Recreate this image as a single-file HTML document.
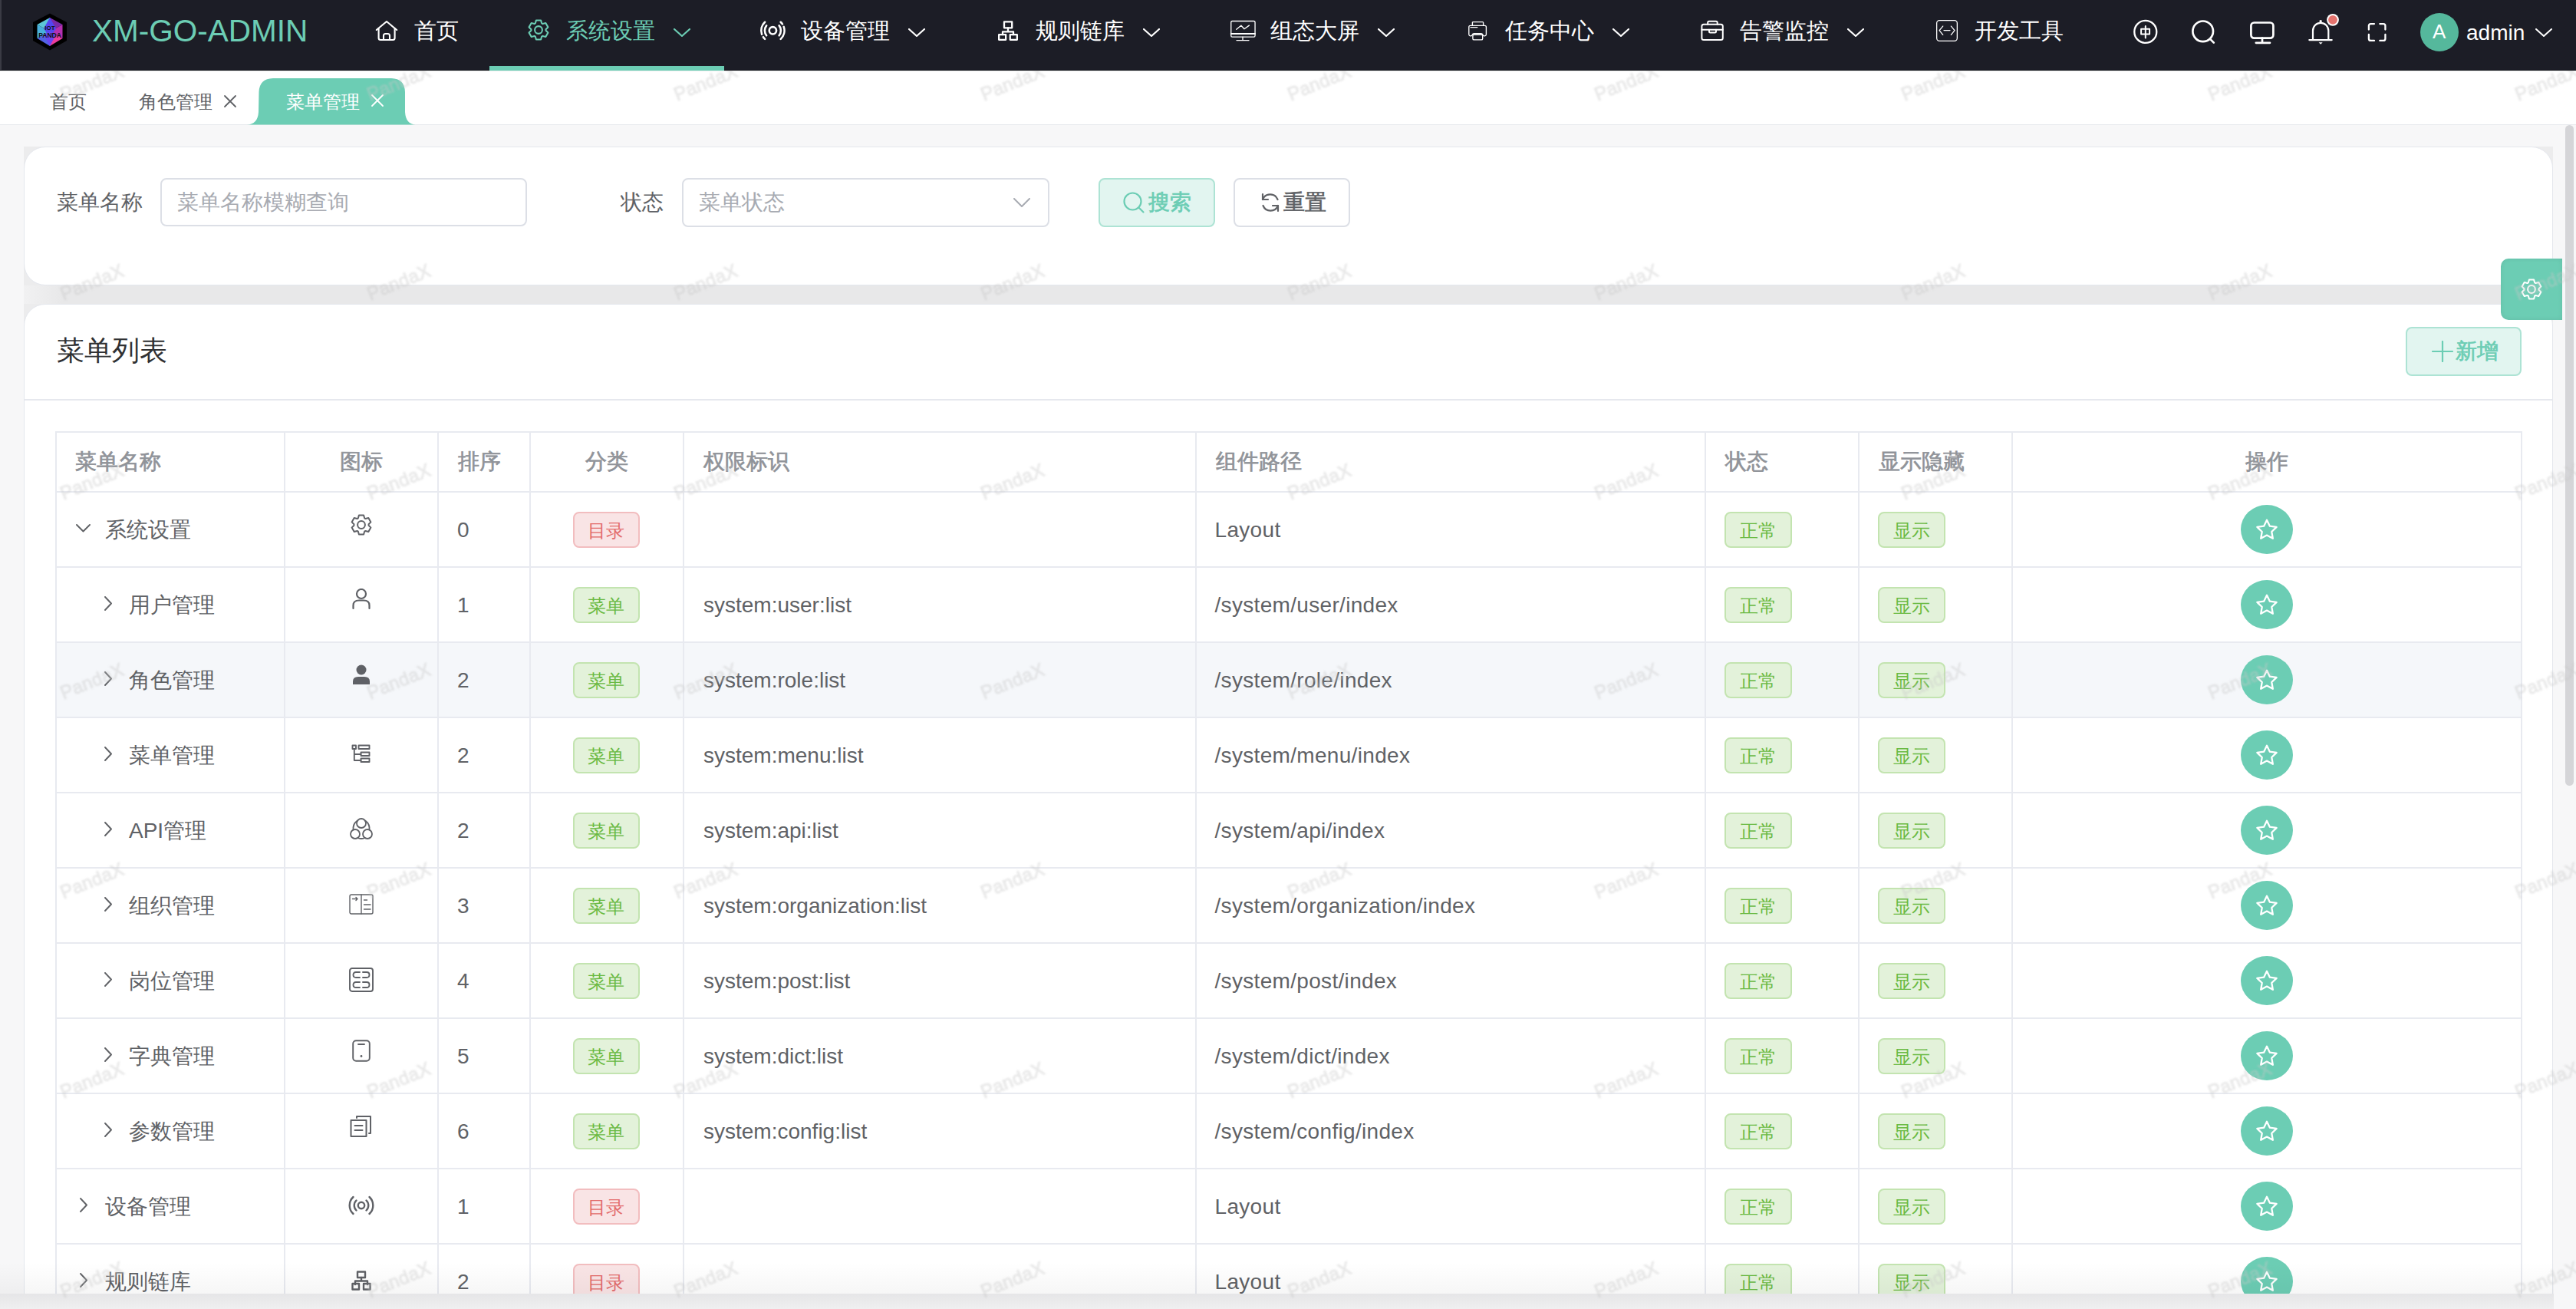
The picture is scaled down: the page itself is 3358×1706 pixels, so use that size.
<!DOCTYPE html>
<html><head><meta charset="utf-8"><title>XM-GO-ADMIN</title>
<style>
html,body{margin:0;padding:0}
body{width:3358px;height:1706px;position:relative;overflow:hidden;font-family:"Liberation Sans",sans-serif;background:#f7f7f8}
.t{position:absolute;line-height:1;white-space:nowrap}
.wm{position:absolute;width:100px;height:26px;line-height:26px;text-align:center;font-size:24px;letter-spacing:0.3px;color:rgba(200,200,200,0.33);-webkit-text-stroke:0.9px rgba(200,200,200,0.33);transform:rotate(-22deg);white-space:nowrap;filter:blur(0.9px)}
</style></head><body>
<div style="position:absolute;left:0;top:0;width:3358px;height:92px;background:#1c1d26;z-index:5"><svg style="position:absolute;left:42px;top:17px" width="46" height="50" viewBox="0 0 46 50">
<polygon points="23,0.5 45,12 45,36 23,48.5 1,36 1,12" fill="#000"/>
<polygon points="23,6 39.5,15 23,24" fill="#7a2aa8"/>
<polygon points="39.5,15 39.5,33 23,24" fill="#b52fb0"/>
<polygon points="39.5,33 23,43 23,24" fill="#ec3c9c"/>
<polygon points="23,43 6.5,33 23,24" fill="#5162e4"/>
<polygon points="6.5,33 6.5,15 23,24" fill="#49b0dc"/>
<polygon points="6.5,15 23,6 23,24" fill="#5cc6d6"/>
<polygon points="23,6 31,20 23,33 15,20" fill="#5346f0"/>
<polygon points="23,43 15,28 23,24 31,28" fill="#6a44f2"/>
<text x="23" y="22" font-family="Liberation Sans" font-size="8" font-weight="700" text-anchor="middle" fill="#111">IOT</text>
<text x="23" y="32" font-family="Liberation Sans" font-size="8.5" font-weight="700" text-anchor="middle" fill="#111">PANDA</text>
</svg><div class="t" style="left:120px;top:20px;font-size:40.5px;color:#6ccdb4;font-weight:400;">XM-GO-ADMIN</div><svg style="position:absolute;left:489px;top:26px;color:#fff" width="30" height="28" viewBox="0 0 30 28" fill="none" stroke="currentColor" stroke-width="2.1" stroke-linecap="round" stroke-linejoin="round"><path d="M1.8,13 L15,2 L28.2,13"/><path d="M4.6,11 V23.5 Q4.6,26 7,26 H23.2 Q25.6,26 25.6,23.5 V11"/><path d="M11,26 V20.5 Q11,18 13.5,18 H16.5 Q19,18 19,20.5 V26"/></svg><div class="t" style="left:540px;top:26px;font-size:29px;color:#fff;font-weight:400;">首页</div><svg style="position:absolute;left:688px;top:25px;color:#6ccdb4" width="28" height="28" viewBox="0 0 28 28" fill="none" stroke="currentColor" stroke-width="2.1" stroke-linecap="round" stroke-linejoin="round"><path d="M9.87,5.34 L10.92,1.47 L17.08,1.47 L18.13,5.34 L19.44,6.09 L23.31,5.07 L26.39,10.40 L23.57,13.25 L23.57,14.75 L26.39,17.60 L23.31,22.93 L19.44,21.91 L18.13,22.66 L17.08,26.53 L10.92,26.53 L9.87,22.66 L8.56,21.91 L4.69,22.93 L1.61,17.60 L4.43,14.75 L4.43,13.25 L1.61,10.40 L4.69,5.07 L8.56,6.09 Z"/><circle cx="14" cy="14" r="4.9"/></svg><div class="t" style="left:738px;top:26px;font-size:29px;color:#6ccdb4;font-weight:400;">系统设置</div><svg style="position:absolute;left:878px;top:37px;color:#6ccdb4" width="22" height="11" viewBox="0 0 22 11" fill="none" stroke="currentColor" stroke-width="2.2" stroke-linecap="round" stroke-linejoin="round"><path d="M1,1 L11.0,10 L21,1"/></svg><svg style="position:absolute;left:983px;top:15px;color:#fff" width="50" height="50" viewBox="0 0 50 50" fill="none" stroke="currentColor" stroke-width="2.6" stroke-linecap="round" stroke-linejoin="round"><circle cx="24.4" cy="24.8" r="4.65"/><path d="M16.13,18.34 A10.5,10.5 0 0 0 16.13,31.26"/><path d="M32.67,18.34 A10.5,10.5 0 0 1 32.67,31.26"/><path d="M14.10,13.76 A15.1,15.1 0 0 0 10.12,29.72"/><path d="M11.88,33.24 A15.1,15.1 0 0 0 14.10,35.84"/><path d="M34.70,13.76 A15.1,15.1 0 0 1 36.92,16.36"/><path d="M38.68,19.88 A15.1,15.1 0 0 1 34.70,35.84"/></svg><div class="t" style="left:1044px;top:26px;font-size:29px;color:#fff;font-weight:400;">设备管理</div><svg style="position:absolute;left:1184px;top:37px;color:#fff" width="22" height="11" viewBox="0 0 22 11" fill="none" stroke="currentColor" stroke-width="2.2" stroke-linecap="round" stroke-linejoin="round"><path d="M1,1 L11.0,10 L21,1"/></svg><svg style="position:absolute;left:1300px;top:26px;color:#fff" width="28" height="28" viewBox="0 0 28 28" fill="none" stroke="currentColor" stroke-width="2.3" stroke-linecap="round" stroke-linejoin="round"><rect x="9" y="2.4" width="10.2" height="7.9"/><path d="M14,10.3 V15.3 M7,19.2 V15.3 H21 V19.2"/><rect x="2.15" y="19.15" width="9" height="6.7"/><rect x="16.75" y="19.15" width="9.1" height="6.7"/></svg><div class="t" style="left:1350px;top:26px;font-size:29px;color:#fff;font-weight:400;">规则链库</div><svg style="position:absolute;left:1490px;top:37px;color:#fff" width="22" height="11" viewBox="0 0 22 11" fill="none" stroke="currentColor" stroke-width="2.2" stroke-linecap="round" stroke-linejoin="round"><path d="M1,1 L11.0,10 L21,1"/></svg><svg style="position:absolute;left:1603px;top:26px;color:#fff" width="35" height="28" viewBox="0 0 35 28" fill="none" stroke="currentColor" stroke-width="1.35" stroke-linecap="round" stroke-linejoin="round"><rect x="1.75" y="1.45" width="31.3" height="20.7" rx="1.6"/><path d="M1.75,18 H33" stroke-width="2"/><path d="M17,22.2 V26.5 M9,26.6 H25"/><path d="M8.75,12.3 L14.9,7.3 L19,11.7 L25.4,7.1"/></svg><div class="t" style="left:1656px;top:26px;font-size:29px;color:#fff;font-weight:400;">组态大屏</div><svg style="position:absolute;left:1796px;top:37px;color:#fff" width="22" height="11" viewBox="0 0 22 11" fill="none" stroke="currentColor" stroke-width="2.2" stroke-linecap="round" stroke-linejoin="round"><path d="M1,1 L11.0,10 L21,1"/></svg><svg style="position:absolute;left:1913px;top:27px;color:#fff" width="26" height="26" viewBox="0 0 26 26" fill="none" stroke="currentColor" stroke-width="1.35" stroke-linecap="round" stroke-linejoin="round"><path d="M6.4,6.3 V2.6 Q6.4,1.6 7.4,1.6 H19.6 Q20.6,1.6 20.6,2.6 V6.3"/><path d="M6,18.8 Q5.2,20 3.5,19.8 Q1.8,19.6 1.8,17.8 V8.2 Q1.8,6.3 3.7,6.3 H22.5 Q24.4,6.3 24.4,8.2 V17.8 Q24.4,19.6 22.7,19.8 Q21,20 20.2,18.8 Q19.6,16.7 18,16.7 H8.2 Q6.6,16.7 6,18.8 Z"/><rect x="6.9" y="18.2" width="12.8" height="6.7" rx="1.5"/><path d="M4,8.6 H12.8"/></svg><div class="t" style="left:1962px;top:26px;font-size:29px;color:#fff;font-weight:400;">任务中心</div><svg style="position:absolute;left:2102px;top:37px;color:#fff" width="22" height="11" viewBox="0 0 22 11" fill="none" stroke="currentColor" stroke-width="2.2" stroke-linecap="round" stroke-linejoin="round"><path d="M1,1 L11.0,10 L21,1"/></svg><svg style="position:absolute;left:2216px;top:26px;color:#fff" width="32" height="28" viewBox="0 0 32 28" fill="none" stroke="currentColor" stroke-width="2" stroke-linecap="round" stroke-linejoin="round"><rect x="2.4" y="5.85" width="27.4" height="20.15" rx="2.5"/><path d="M10.2,5.85 V3.5 Q10.2,1.8 12,1.8 H20.8 Q22.7,1.8 22.7,3.5 V5.85"/><path d="M2.4,12.7 H29.8"/><path d="M12,12.7 V15.3 Q12,16.6 13.4,16.6 H19.6 Q21,16.6 21,15.3 V12.7"/></svg><div class="t" style="left:2268px;top:26px;font-size:29px;color:#fff;font-weight:400;">告警监控</div><svg style="position:absolute;left:2408px;top:37px;color:#fff" width="22" height="11" viewBox="0 0 22 11" fill="none" stroke="currentColor" stroke-width="2.2" stroke-linecap="round" stroke-linejoin="round"><path d="M1,1 L11.0,10 L21,1"/></svg><svg style="position:absolute;left:2523px;top:25px;color:#fff" width="30" height="30" viewBox="0 0 30 30" fill="none" stroke="currentColor" stroke-width="1.3" stroke-linecap="round" stroke-linejoin="round"><rect x="1.65" y="1.65" width="26.7" height="26.7" rx="3.5"/><path d="M9.7,9.1 L5.1,14.6 L9.7,20.4 M11,14.6 H19 M20.4,9.1 L25,14.6 L20.4,20.4"/></svg><div class="t" style="left:2574px;top:26px;font-size:29px;color:#fff;font-weight:400;">开发工具</div><div style="position:absolute;left:0;top:0;width:2px;height:92px;background:#3a3b44"></div><div style="position:absolute;left:0;top:91px;width:3358px;height:1px;background:#111218"></div><div style="position:absolute;left:638px;top:86px;width:306px;height:6px;background:#6ccdb4"></div><svg style="position:absolute;left:2779px;top:24px;color:#fff" width="36" height="36" viewBox="0 0 36 36" fill="none" stroke="currentColor" stroke-width="2" stroke-linecap="round" stroke-linejoin="round"><circle cx="17.8" cy="17.4" r="14.5" stroke-width="2.3"/><rect x="12.1" y="13.8" width="11" height="6.8"/><path d="M17.8,10.1 V25.6"/></svg><svg style="position:absolute;left:2856px;top:24px;color:#fff" width="36" height="36" viewBox="0 0 36 36" fill="none" stroke="currentColor" stroke-width="2.7" stroke-linecap="round" stroke-linejoin="round"><circle cx="15.7" cy="16.8" r="13.3"/><path d="M25.6,27.4 L29.8,31.6"/></svg><svg style="position:absolute;left:2932px;top:27px;color:#fff" width="36" height="34" viewBox="0 0 36 34" fill="none" stroke="currentColor" stroke-width="2.7" stroke-linecap="round" stroke-linejoin="round"><rect x="2.4" y="2.5" width="29" height="20.1" rx="4"/><path d="M17,22.6 V28.5 M8.8,28.8 H27"/></svg><svg style="position:absolute;left:3005px;top:20px;color:#fff" width="40" height="40" viewBox="0 0 40 40" fill="none" stroke="currentColor" stroke-width="2.2" stroke-linecap="round" stroke-linejoin="round"><path d="M10,31.5 V20 A10.15,10.15 0 0 1 30.3,20 V31.5"/><path d="M5.3,32.1 H34.7"/><circle cx="20.15" cy="7.6" r="1.7" fill="#fff" stroke="none"/><path d="M17.6,35.2 H22.7 L20.15,37.8 Z" fill="#fff" stroke="none"/></svg><svg style="position:absolute;left:3031px;top:16px" width="20" height="20" viewBox="0 0 20 20"><circle cx="10" cy="9.8" r="7.9" fill="#fff"/><circle cx="10" cy="9.8" r="5.9" fill="#e5736e"/></svg><svg style="position:absolute;left:3085px;top:28px;color:#fff" width="28" height="28" viewBox="0 0 28 28" fill="none" stroke="currentColor" stroke-width="2.3" stroke-linecap="round" stroke-linejoin="round"><path d="M2.9,10.5 V5.6 Q2.9,3.1 5.4,3.1 H10 M17.3,3.1 H21.9 Q24.4,3.1 24.4,5.6 V10.5 M2.9,17 V22.4 Q2.9,24.9 5.4,24.9 H10 M17.3,24.9 H21.9 Q24.4,24.9 24.4,22.4 V17"/></svg><div style="position:absolute;left:3155px;top:17px;width:50px;height:50px;border-radius:50%;background:#55b89c"></div><div class="t" style="left:3171px;top:27.5px;font-size:26px;color:#fff;font-weight:400;">A</div><div class="t" style="left:3215px;top:29px;font-size:28px;color:#fff;font-weight:400;">admin</div><svg style="position:absolute;left:3305px;top:37px;color:#fff" width="22" height="11" viewBox="0 0 22 11" fill="none" stroke="currentColor" stroke-width="2" stroke-linecap="round" stroke-linejoin="round"><path d="M1,1 L11.0,10 L21,1"/></svg></div><div style="position:absolute;left:0;top:92px;width:3358px;height:70px;background:#fff"></div><div style="position:absolute;left:0;top:162px;width:3358px;height:1px;background:#e6e8ec"></div><div style="position:absolute;left:0;top:92px;width:3358px;height:1px;background:#eef0f0"></div><div class="t" style="left:65px;top:121px;font-size:24px;color:#606266;font-weight:400;">首页</div><div class="t" style="left:181px;top:121px;font-size:24px;color:#606266;font-weight:400;">角色管理</div><svg style="position:absolute;left:291px;top:123px;color:#606266" width="18" height="18" viewBox="0 0 18 18" fill="none" stroke="currentColor" stroke-width="1.8" stroke-linecap="round" stroke-linejoin="round"><path d="M2,2 L16,16 M16,2 L2,16"/></svg><svg style="position:absolute;left:322px;top:102px" width="220" height="61" viewBox="0 0 220 61">
<path d="M0,60.5 Q14,60 15,44 L15.5,18 Q16,0.5 34,0 L188,0 Q205.5,0.5 206,18 L206,44 Q207,60 220,60.5 Z" fill="#6ccdb4"/></svg><div class="t" style="left:373px;top:121px;font-size:24px;color:#fff;font-weight:400;">菜单管理</div><svg style="position:absolute;left:483px;top:122px;color:#fff" width="18" height="18" viewBox="0 0 18 18" fill="none" stroke="currentColor" stroke-width="1.8" stroke-linecap="round" stroke-linejoin="round"><path d="M2,2 L16,16 M16,2 L2,16"/></svg><div style="position:absolute;left:0;top:163px;width:3358px;height:1543px;background:#f7f7f8"></div><div style="position:absolute;left:31px;top:191px;width:3297px;height:230px;background:#ececed"></div><div style="position:absolute;left:31px;top:191px;width:3297px;height:181px;background:#fff;border:1px solid #e4e7ed;border-radius:28px;box-sizing:border-box"></div><div style="position:absolute;left:31px;top:372px;width:3297px;height:24px;background:linear-gradient(90deg,#f1f1f2,#e8e8e9 50px,#e8e8e9)"></div><div class="t" style="left:74px;top:250px;font-size:28px;color:#606266;font-weight:400;">菜单名称</div><div style="position:absolute;left:209px;top:232px;width:478px;height:63px;border:2px solid #dcdfe6;border-radius:8px;box-sizing:border-box;background:#fff"></div><div class="t" style="left:231px;top:250px;font-size:28px;color:#a8abb2;font-weight:400;">菜单名称模糊查询</div><div class="t" style="left:809px;top:250px;font-size:28px;color:#606266;font-weight:400;">状态</div><div style="position:absolute;left:889px;top:232px;width:479px;height:64px;border:2px solid #dcdfe6;border-radius:8px;box-sizing:border-box;background:#fff"></div><div class="t" style="left:911px;top:250px;font-size:28px;color:#a8abb2;font-weight:400;">菜单状态</div><svg style="position:absolute;left:1321px;top:258px;color:#a8abb2" width="22" height="12" viewBox="0 0 22 12" fill="none" stroke="currentColor" stroke-width="2" stroke-linecap="round" stroke-linejoin="round"><path d="M1,1 L11.0,11 L21,1"/></svg><div style="position:absolute;left:1432px;top:232px;width:152px;height:64px;border:2px solid #ade3d4;border-radius:8px;box-sizing:border-box;background:#e2f5f0"></div><svg style="position:absolute;left:1464px;top:250px;color:#6ccdb4" width="30" height="30" viewBox="0 0 30 30" fill="none" stroke="currentColor" stroke-width="2.2" stroke-linecap="round" stroke-linejoin="round"><circle cx="12.5" cy="12.5" r="11"/><path d="M20.5,20.5 L26.5,26.5"/></svg><div class="t" style="left:1497px;top:250px;font-size:27.5px;color:#6ccdb4;font-weight:400;-webkit-text-stroke:0.7px #6ccdb4">搜索</div><div style="position:absolute;left:1608px;top:232px;width:152px;height:64px;border:2px solid #dcdfe6;border-radius:8px;box-sizing:border-box;background:#fff"></div><svg style="position:absolute;left:1642px;top:250px;color:#606266" width="28" height="28" viewBox="0 0 28 28" fill="none" stroke="currentColor" stroke-width="2.2" stroke-linecap="round" stroke-linejoin="round"><path d="M23.5,10 A10.5,10.5 0 0 0 4,10"/><path d="M4,3 V10 H11" /><path d="M4.5,18 A10.5,10.5 0 0 0 24,18"/><path d="M24,25 V18 H17"/></svg><div class="t" style="left:1673px;top:250px;font-size:27.5px;color:#606266;font-weight:400;-webkit-text-stroke:0.7px #606266">重置</div><div style="position:absolute;left:31px;top:396px;width:3297px;height:1400px;background:#fff;border:1px solid #e4e7ed;border-radius:28px;box-sizing:border-box"></div><div class="t" style="left:74px;top:439px;font-size:36px;color:#303133;font-weight:400;">菜单列表</div><div style="position:absolute;left:3136px;top:426px;width:151px;height:64px;border:2px solid #ade3d4;border-radius:8px;box-sizing:border-box;background:#e2f5f0"></div><svg style="position:absolute;left:3170px;top:444px;color:#6ccdb4" width="28" height="28" viewBox="0 0 28 28" fill="none" stroke="currentColor" stroke-width="2.2" stroke-linecap="round" stroke-linejoin="round"><path d="M14,1 V27 M1,14 H27"/></svg><div class="t" style="left:3201px;top:444px;font-size:27.5px;color:#6ccdb4;font-weight:400;-webkit-text-stroke:0.7px #6ccdb4">新增</div><div style="position:absolute;left:32px;top:520px;width:3295px;height:2px;background:#e6e8ee"></div><div style="position:absolute;left:73px;top:837px;width:3214px;height:98px;background:#f5f7fa"></div><div style="position:absolute;left:73px;top:562px;width:3215px;height:2px;background:#e8eaf0"></div><div style="position:absolute;left:73px;top:640px;width:3215px;height:2px;background:#e8eaf0"></div><div style="position:absolute;left:73px;top:738px;width:3215px;height:2px;background:#e8eaf0"></div><div style="position:absolute;left:73px;top:836px;width:3215px;height:2px;background:#e8eaf0"></div><div style="position:absolute;left:73px;top:934px;width:3215px;height:2px;background:#e8eaf0"></div><div style="position:absolute;left:73px;top:1032px;width:3215px;height:2px;background:#e8eaf0"></div><div style="position:absolute;left:73px;top:1130px;width:3215px;height:2px;background:#e8eaf0"></div><div style="position:absolute;left:73px;top:1228px;width:3215px;height:2px;background:#e8eaf0"></div><div style="position:absolute;left:73px;top:1326px;width:3215px;height:2px;background:#e8eaf0"></div><div style="position:absolute;left:73px;top:1424px;width:3215px;height:2px;background:#e8eaf0"></div><div style="position:absolute;left:73px;top:1522px;width:3215px;height:2px;background:#e8eaf0"></div><div style="position:absolute;left:73px;top:1620px;width:3215px;height:2px;background:#e8eaf0"></div><div style="position:absolute;left:73px;top:1718px;width:3215px;height:2px;background:#e8eaf0"></div><div style="position:absolute;left:72px;top:562px;width:2px;height:1157px;background:#e8eaf0"></div><div style="position:absolute;left:370px;top:562px;width:2px;height:1157px;background:#e8eaf0"></div><div style="position:absolute;left:570px;top:562px;width:2px;height:1157px;background:#e8eaf0"></div><div style="position:absolute;left:690px;top:562px;width:2px;height:1157px;background:#e8eaf0"></div><div style="position:absolute;left:890px;top:562px;width:2px;height:1157px;background:#e8eaf0"></div><div style="position:absolute;left:1558px;top:562px;width:2px;height:1157px;background:#e8eaf0"></div><div style="position:absolute;left:2222px;top:562px;width:2px;height:1157px;background:#e8eaf0"></div><div style="position:absolute;left:2422px;top:562px;width:2px;height:1157px;background:#e8eaf0"></div><div style="position:absolute;left:2622px;top:562px;width:2px;height:1157px;background:#e8eaf0"></div><div style="position:absolute;left:3286px;top:562px;width:2px;height:1157px;background:#e8eaf0"></div><div class="t" style="left:97.5px;top:588.0px;font-size:28px;color:#909399;font-weight:400;-webkit-text-stroke:0.7px #909399;">菜单名称</div><div class="t" style="left:371px;top:588.0px;width:200px;text-align:center;font-size:28px;color:#909399;font-weight:400;-webkit-text-stroke:0.7px #909399;">图标</div><div class="t" style="left:597px;top:588.0px;font-size:28px;color:#909399;font-weight:400;-webkit-text-stroke:0.7px #909399;">排序</div><div class="t" style="left:691px;top:588.0px;width:200px;text-align:center;font-size:28px;color:#909399;font-weight:400;-webkit-text-stroke:0.7px #909399;">分类</div><div class="t" style="left:917px;top:588.0px;font-size:28px;color:#909399;font-weight:400;-webkit-text-stroke:0.7px #909399;">权限标识</div><div class="t" style="left:1585px;top:588.0px;font-size:28px;color:#909399;font-weight:400;-webkit-text-stroke:0.7px #909399;">组件路径</div><div class="t" style="left:2249px;top:588.0px;font-size:28px;color:#909399;font-weight:400;-webkit-text-stroke:0.7px #909399;">状态</div><div class="t" style="left:2449px;top:588.0px;font-size:28px;color:#909399;font-weight:400;-webkit-text-stroke:0.7px #909399;">显示隐藏</div><div class="t" style="left:2623px;top:588.0px;width:664px;text-align:center;font-size:28px;color:#909399;font-weight:400;-webkit-text-stroke:0.7px #909399;">操作</div><svg style="position:absolute;left:98.5px;top:683.2px;color:#606266" width="19" height="10.5" viewBox="0 0 19 10.5" fill="none" stroke="currentColor" stroke-width="1.9" stroke-linecap="round" stroke-linejoin="round"><path d="M1,1 L9.5,9.5 L18,1"/></svg><div class="t" style="left:137px;top:677.0px;font-size:28px;color:#606266;font-weight:400;">系统设置</div><svg style="position:absolute;left:456.8px;top:669.8px;color:#5f6166" width="28" height="28" viewBox="0 0 28 28" fill="none" stroke="currentColor" stroke-width="2" stroke-linecap="round" stroke-linejoin="round"><path d="M9.87,5.34 L10.92,1.47 L17.08,1.47 L18.13,5.34 L19.44,6.09 L23.31,5.07 L26.39,10.40 L23.57,13.25 L23.57,14.75 L26.39,17.60 L23.31,22.93 L19.44,21.91 L18.13,22.66 L17.08,26.53 L10.92,26.53 L9.87,22.66 L8.56,21.91 L4.69,22.93 L1.61,17.60 L4.43,14.75 L4.43,13.25 L1.61,10.40 L4.69,5.07 L8.56,6.09 Z"/><circle cx="14" cy="14" r="4.9"/></svg><div class="t" style="left:596px;top:677.0px;font-size:28px;color:#606266;font-weight:400;">0</div><div style="position:absolute;left:746.7px;top:667.25px;width:87.5px;height:46.5px;box-sizing:border-box;background:#f9e4e5;border:2px solid #f2bdbf;border-radius:8px;color:#e36c6c;font-size:24px;line-height:45px;text-align:center">目录</div><div class="t" style="left:1583.5px;top:677.0px;font-size:28px;color:#606266;font-weight:400;"><span style="letter-spacing:0.32px">Layout</span></div><div style="position:absolute;left:2248.0px;top:667.25px;width:87.5px;height:46.5px;box-sizing:border-box;background:#e3f2da;border:2px solid #c3e4b0;border-radius:8px;color:#6aba43;font-size:24px;line-height:45px;text-align:center">正常</div><div style="position:absolute;left:2448.0px;top:667.25px;width:87.5px;height:46.5px;box-sizing:border-box;background:#e3f2da;border:2px solid #c3e4b0;border-radius:8px;color:#6aba43;font-size:24px;line-height:45px;text-align:center">显示</div><div style="position:absolute;left:2921px;top:658.0px;width:68px;height:64px;border-radius:50%;background:#6ccdb4"></div><svg style="position:absolute;left:2939px;top:675.0px;color:#fff" width="32" height="32" viewBox="0 0 32 32" fill="none" stroke="currentColor" stroke-width="2.3" stroke-linecap="round" stroke-linejoin="round"><path d="M16.00,2.70 L19.88,10.66 L28.65,11.89 L22.28,18.04 L23.82,26.76 L16.00,22.60 L8.18,26.76 L9.72,18.04 L3.35,11.89 L12.12,10.66 Z"/></svg><svg style="position:absolute;left:135.5px;top:776.5px;color:#606266" width="10" height="19" viewBox="0 0 10 19" fill="none" stroke="currentColor" stroke-width="1.9" stroke-linecap="round" stroke-linejoin="round"><path d="M1,1 L9,9.5 L1,18"/></svg><div class="t" style="left:168px;top:775.0px;font-size:28px;color:#606266;font-weight:400;">用户管理</div><svg style="position:absolute;left:458.8px;top:767.4px;color:#5f6166" width="24" height="28" viewBox="0 0 24 28" fill="none" stroke="currentColor" stroke-width="2.2" stroke-linecap="round" stroke-linejoin="round"><circle cx="12" cy="7" r="6"/><path d="M1.5,26 V22 Q1.5,15.5 9,15.5 H15 Q22.5,15.5 22.5,22 V26"/></svg><div class="t" style="left:596px;top:775.0px;font-size:28px;color:#606266;font-weight:400;">1</div><div style="position:absolute;left:746.7px;top:765.25px;width:87.5px;height:46.5px;box-sizing:border-box;background:#e3f2da;border:2px solid #c3e4b0;border-radius:8px;color:#6aba43;font-size:24px;line-height:45px;text-align:center">菜单</div><div class="t" style="left:917px;top:775.0px;font-size:28px;color:#606266;font-weight:400;">system:user:list</div><div class="t" style="left:1583.5px;top:775.0px;font-size:28px;color:#606266;font-weight:400;"><span style="letter-spacing:0.32px">/system/user/index</span></div><div style="position:absolute;left:2248.0px;top:765.25px;width:87.5px;height:46.5px;box-sizing:border-box;background:#e3f2da;border:2px solid #c3e4b0;border-radius:8px;color:#6aba43;font-size:24px;line-height:45px;text-align:center">正常</div><div style="position:absolute;left:2448.0px;top:765.25px;width:87.5px;height:46.5px;box-sizing:border-box;background:#e3f2da;border:2px solid #c3e4b0;border-radius:8px;color:#6aba43;font-size:24px;line-height:45px;text-align:center">显示</div><div style="position:absolute;left:2921px;top:756.0px;width:68px;height:64px;border-radius:50%;background:#6ccdb4"></div><svg style="position:absolute;left:2939px;top:773.0px;color:#fff" width="32" height="32" viewBox="0 0 32 32" fill="none" stroke="currentColor" stroke-width="2.3" stroke-linecap="round" stroke-linejoin="round"><path d="M16.00,2.70 L19.88,10.66 L28.65,11.89 L22.28,18.04 L23.82,26.76 L16.00,22.60 L8.18,26.76 L9.72,18.04 L3.35,11.89 L12.12,10.66 Z"/></svg><svg style="position:absolute;left:135.5px;top:874.5px;color:#606266" width="10" height="19" viewBox="0 0 10 19" fill="none" stroke="currentColor" stroke-width="1.9" stroke-linecap="round" stroke-linejoin="round"><path d="M1,1 L9,9.5 L1,18"/></svg><div class="t" style="left:168px;top:873.0px;font-size:28px;color:#606266;font-weight:400;">角色管理</div><svg style="position:absolute;left:458.8px;top:865.8px;color:#5f6166" width="24" height="28" viewBox="0 0 24 28" fill="none" stroke="currentColor" stroke-width="0" stroke-linecap="round" stroke-linejoin="round"><circle cx="12" cy="7" r="6.5" fill="currentColor" stroke="none"/><path d="M1,26 V22 Q1,16 8,16 H16 Q23,16 23,22 V26 Z" fill="currentColor" stroke="none"/></svg><div class="t" style="left:596px;top:873.0px;font-size:28px;color:#606266;font-weight:400;">2</div><div style="position:absolute;left:746.7px;top:863.25px;width:87.5px;height:46.5px;box-sizing:border-box;background:#e3f2da;border:2px solid #c3e4b0;border-radius:8px;color:#6aba43;font-size:24px;line-height:45px;text-align:center">菜单</div><div class="t" style="left:917px;top:873.0px;font-size:28px;color:#606266;font-weight:400;">system:role:list</div><div class="t" style="left:1583.5px;top:873.0px;font-size:28px;color:#606266;font-weight:400;"><span style="letter-spacing:0.32px">/system/role/index</span></div><div style="position:absolute;left:2248.0px;top:863.25px;width:87.5px;height:46.5px;box-sizing:border-box;background:#e3f2da;border:2px solid #c3e4b0;border-radius:8px;color:#6aba43;font-size:24px;line-height:45px;text-align:center">正常</div><div style="position:absolute;left:2448.0px;top:863.25px;width:87.5px;height:46.5px;box-sizing:border-box;background:#e3f2da;border:2px solid #c3e4b0;border-radius:8px;color:#6aba43;font-size:24px;line-height:45px;text-align:center">显示</div><div style="position:absolute;left:2921px;top:854.0px;width:68px;height:64px;border-radius:50%;background:#6ccdb4"></div><svg style="position:absolute;left:2939px;top:871.0px;color:#fff" width="32" height="32" viewBox="0 0 32 32" fill="none" stroke="currentColor" stroke-width="2.3" stroke-linecap="round" stroke-linejoin="round"><path d="M16.00,2.70 L19.88,10.66 L28.65,11.89 L22.28,18.04 L23.82,26.76 L16.00,22.60 L8.18,26.76 L9.72,18.04 L3.35,11.89 L12.12,10.66 Z"/></svg><svg style="position:absolute;left:135.5px;top:972.5px;color:#606266" width="10" height="19" viewBox="0 0 10 19" fill="none" stroke="currentColor" stroke-width="1.9" stroke-linecap="round" stroke-linejoin="round"><path d="M1,1 L9,9.5 L1,18"/></svg><div class="t" style="left:168px;top:971.0px;font-size:28px;color:#606266;font-weight:400;">菜单管理</div><svg style="position:absolute;left:458.3px;top:970.4px;color:#5f6166" width="25" height="25" viewBox="0 0 25 25" fill="none" stroke="currentColor" stroke-width="1.9" stroke-linecap="round" stroke-linejoin="round"><rect x="1.5" y="1.5" width="4.5" height="4.5"/><rect x="9.5" y="1.5" width="14" height="4.5"/><path d="M3.8,6 V21 H12.5 M3.8,13 H12.5"/><rect x="12.5" y="10.5" width="11" height="4.5"/><rect x="12.5" y="18.5" width="11" height="4.5"/></svg><div class="t" style="left:596px;top:971.0px;font-size:28px;color:#606266;font-weight:400;">2</div><div style="position:absolute;left:746.7px;top:961.25px;width:87.5px;height:46.5px;box-sizing:border-box;background:#e3f2da;border:2px solid #c3e4b0;border-radius:8px;color:#6aba43;font-size:24px;line-height:45px;text-align:center">菜单</div><div class="t" style="left:917px;top:971.0px;font-size:28px;color:#606266;font-weight:400;">system:menu:list</div><div class="t" style="left:1583.5px;top:971.0px;font-size:28px;color:#606266;font-weight:400;"><span style="letter-spacing:0.32px">/system/menu/index</span></div><div style="position:absolute;left:2248.0px;top:961.25px;width:87.5px;height:46.5px;box-sizing:border-box;background:#e3f2da;border:2px solid #c3e4b0;border-radius:8px;color:#6aba43;font-size:24px;line-height:45px;text-align:center">正常</div><div style="position:absolute;left:2448.0px;top:961.25px;width:87.5px;height:46.5px;box-sizing:border-box;background:#e3f2da;border:2px solid #c3e4b0;border-radius:8px;color:#6aba43;font-size:24px;line-height:45px;text-align:center">显示</div><div style="position:absolute;left:2921px;top:952.0px;width:68px;height:64px;border-radius:50%;background:#6ccdb4"></div><svg style="position:absolute;left:2939px;top:969.0px;color:#fff" width="32" height="32" viewBox="0 0 32 32" fill="none" stroke="currentColor" stroke-width="2.3" stroke-linecap="round" stroke-linejoin="round"><path d="M16.00,2.70 L19.88,10.66 L28.65,11.89 L22.28,18.04 L23.82,26.76 L16.00,22.60 L8.18,26.76 L9.72,18.04 L3.35,11.89 L12.12,10.66 Z"/></svg><svg style="position:absolute;left:135.5px;top:1070.5px;color:#606266" width="10" height="19" viewBox="0 0 10 19" fill="none" stroke="currentColor" stroke-width="1.9" stroke-linecap="round" stroke-linejoin="round"><path d="M1,1 L9,9.5 L1,18"/></svg><div class="t" style="left:168px;top:1069.0px;font-size:28px;color:#606266;font-weight:400;">API管理</div><svg style="position:absolute;left:455.8px;top:1065.7px;color:#5f6166" width="30" height="30" viewBox="0 0 30 30" fill="none" stroke="currentColor" stroke-width="1.8" stroke-linecap="round" stroke-linejoin="round"><circle cx="15" cy="7" r="6"/><circle cx="7" cy="21" r="6"/><circle cx="23" cy="21" r="6"/><path d="M4.5,15.6 A13,13 0 0 1 9.6,3.7" /><path d="M20.4,3.7 A13,13 0 0 1 25.5,15.6"/><path d="M11.5,26.5 A13,13 0 0 0 18.5,26.5"/></svg><div class="t" style="left:596px;top:1069.0px;font-size:28px;color:#606266;font-weight:400;">2</div><div style="position:absolute;left:746.7px;top:1059.25px;width:87.5px;height:46.5px;box-sizing:border-box;background:#e3f2da;border:2px solid #c3e4b0;border-radius:8px;color:#6aba43;font-size:24px;line-height:45px;text-align:center">菜单</div><div class="t" style="left:917px;top:1069.0px;font-size:28px;color:#606266;font-weight:400;">system:api:list</div><div class="t" style="left:1583.5px;top:1069.0px;font-size:28px;color:#606266;font-weight:400;"><span style="letter-spacing:0.32px">/system/api/index</span></div><div style="position:absolute;left:2248.0px;top:1059.25px;width:87.5px;height:46.5px;box-sizing:border-box;background:#e3f2da;border:2px solid #c3e4b0;border-radius:8px;color:#6aba43;font-size:24px;line-height:45px;text-align:center">正常</div><div style="position:absolute;left:2448.0px;top:1059.25px;width:87.5px;height:46.5px;box-sizing:border-box;background:#e3f2da;border:2px solid #c3e4b0;border-radius:8px;color:#6aba43;font-size:24px;line-height:45px;text-align:center">显示</div><div style="position:absolute;left:2921px;top:1050.0px;width:68px;height:64px;border-radius:50%;background:#6ccdb4"></div><svg style="position:absolute;left:2939px;top:1067.0px;color:#fff" width="32" height="32" viewBox="0 0 32 32" fill="none" stroke="currentColor" stroke-width="2.3" stroke-linecap="round" stroke-linejoin="round"><path d="M16.00,2.70 L19.88,10.66 L28.65,11.89 L22.28,18.04 L23.82,26.76 L16.00,22.60 L8.18,26.76 L9.72,18.04 L3.35,11.89 L12.12,10.66 Z"/></svg><svg style="position:absolute;left:135.5px;top:1168.5px;color:#606266" width="10" height="19" viewBox="0 0 10 19" fill="none" stroke="currentColor" stroke-width="1.9" stroke-linecap="round" stroke-linejoin="round"><path d="M1,1 L9,9.5 L1,18"/></svg><div class="t" style="left:168px;top:1167.0px;font-size:28px;color:#606266;font-weight:400;">组织管理</div><svg style="position:absolute;left:454.8px;top:1165.3px;color:#5f6166" width="32" height="27" viewBox="0 0 32 27" fill="none" stroke="currentColor" stroke-width="1.4" stroke-linecap="round" stroke-linejoin="round"><rect x="1" y="1" width="30" height="25" rx="2"/><path d="M16,1 V26"/><path d="M4.5,6.5 H11 M9,4.5 L11,6.5 L9,8.5 M19.5,8 H23.5 M19.5,14 H28 M19.5,20 H28"/></svg><div class="t" style="left:596px;top:1167.0px;font-size:28px;color:#606266;font-weight:400;">3</div><div style="position:absolute;left:746.7px;top:1157.25px;width:87.5px;height:46.5px;box-sizing:border-box;background:#e3f2da;border:2px solid #c3e4b0;border-radius:8px;color:#6aba43;font-size:24px;line-height:45px;text-align:center">菜单</div><div class="t" style="left:917px;top:1167.0px;font-size:28px;color:#606266;font-weight:400;">system:organization:list</div><div class="t" style="left:1583.5px;top:1167.0px;font-size:28px;color:#606266;font-weight:400;"><span style="letter-spacing:0.32px">/system/organization/index</span></div><div style="position:absolute;left:2248.0px;top:1157.25px;width:87.5px;height:46.5px;box-sizing:border-box;background:#e3f2da;border:2px solid #c3e4b0;border-radius:8px;color:#6aba43;font-size:24px;line-height:45px;text-align:center">正常</div><div style="position:absolute;left:2448.0px;top:1157.25px;width:87.5px;height:46.5px;box-sizing:border-box;background:#e3f2da;border:2px solid #c3e4b0;border-radius:8px;color:#6aba43;font-size:24px;line-height:45px;text-align:center">显示</div><div style="position:absolute;left:2921px;top:1148.0px;width:68px;height:64px;border-radius:50%;background:#6ccdb4"></div><svg style="position:absolute;left:2939px;top:1165.0px;color:#fff" width="32" height="32" viewBox="0 0 32 32" fill="none" stroke="currentColor" stroke-width="2.3" stroke-linecap="round" stroke-linejoin="round"><path d="M16.00,2.70 L19.88,10.66 L28.65,11.89 L22.28,18.04 L23.82,26.76 L16.00,22.60 L8.18,26.76 L9.72,18.04 L3.35,11.89 L12.12,10.66 Z"/></svg><svg style="position:absolute;left:135.5px;top:1266.5px;color:#606266" width="10" height="19" viewBox="0 0 10 19" fill="none" stroke="currentColor" stroke-width="1.9" stroke-linecap="round" stroke-linejoin="round"><path d="M1,1 L9,9.5 L1,18"/></svg><div class="t" style="left:168px;top:1265.0px;font-size:28px;color:#606266;font-weight:400;">岗位管理</div><svg style="position:absolute;left:454.8px;top:1260.9px;color:#5f6166" width="32" height="32" viewBox="0 0 32 32" fill="none" stroke="currentColor" stroke-width="1.9" stroke-linecap="round" stroke-linejoin="round"><rect x="1" y="1" width="30" height="30" rx="3"/><path d="M14,6 H9 Q5.5,6 5.5,9.5 Q5.5,13 9,13 H14 M18,6 H23 Q26.5,6 26.5,9.5 Q26.5,13 23,13 H18"/><path d="M14,19 H9 Q5.5,19 5.5,22.5 Q5.5,26 9,26 H14 M18,19 H23 Q26.5,19 26.5,22.5 Q26.5,26 23,26 H18"/></svg><div class="t" style="left:596px;top:1265.0px;font-size:28px;color:#606266;font-weight:400;">4</div><div style="position:absolute;left:746.7px;top:1255.25px;width:87.5px;height:46.5px;box-sizing:border-box;background:#e3f2da;border:2px solid #c3e4b0;border-radius:8px;color:#6aba43;font-size:24px;line-height:45px;text-align:center">菜单</div><div class="t" style="left:917px;top:1265.0px;font-size:28px;color:#606266;font-weight:400;">system:post:list</div><div class="t" style="left:1583.5px;top:1265.0px;font-size:28px;color:#606266;font-weight:400;"><span style="letter-spacing:0.32px">/system/post/index</span></div><div style="position:absolute;left:2248.0px;top:1255.25px;width:87.5px;height:46.5px;box-sizing:border-box;background:#e3f2da;border:2px solid #c3e4b0;border-radius:8px;color:#6aba43;font-size:24px;line-height:45px;text-align:center">正常</div><div style="position:absolute;left:2448.0px;top:1255.25px;width:87.5px;height:46.5px;box-sizing:border-box;background:#e3f2da;border:2px solid #c3e4b0;border-radius:8px;color:#6aba43;font-size:24px;line-height:45px;text-align:center">显示</div><div style="position:absolute;left:2921px;top:1246.0px;width:68px;height:64px;border-radius:50%;background:#6ccdb4"></div><svg style="position:absolute;left:2939px;top:1263.0px;color:#fff" width="32" height="32" viewBox="0 0 32 32" fill="none" stroke="currentColor" stroke-width="2.3" stroke-linecap="round" stroke-linejoin="round"><path d="M16.00,2.70 L19.88,10.66 L28.65,11.89 L22.28,18.04 L23.82,26.76 L16.00,22.60 L8.18,26.76 L9.72,18.04 L3.35,11.89 L12.12,10.66 Z"/></svg><svg style="position:absolute;left:135.5px;top:1364.5px;color:#606266" width="10" height="19" viewBox="0 0 10 19" fill="none" stroke="currentColor" stroke-width="1.9" stroke-linecap="round" stroke-linejoin="round"><path d="M1,1 L9,9.5 L1,18"/></svg><div class="t" style="left:168px;top:1363.0px;font-size:28px;color:#606266;font-weight:400;">字典管理</div><svg style="position:absolute;left:458.8px;top:1355.1px;color:#5f6166" width="24" height="29" viewBox="0 0 24 29" fill="none" stroke="currentColor" stroke-width="1.9" stroke-linecap="round" stroke-linejoin="round"><rect x="1.2" y="1.2" width="21.6" height="26.6" rx="4"/><path d="M8,6 H16"/><circle cx="12" cy="21.5" r="1.4" fill="currentColor" stroke="none"/></svg><div class="t" style="left:596px;top:1363.0px;font-size:28px;color:#606266;font-weight:400;">5</div><div style="position:absolute;left:746.7px;top:1353.25px;width:87.5px;height:46.5px;box-sizing:border-box;background:#e3f2da;border:2px solid #c3e4b0;border-radius:8px;color:#6aba43;font-size:24px;line-height:45px;text-align:center">菜单</div><div class="t" style="left:917px;top:1363.0px;font-size:28px;color:#606266;font-weight:400;">system:dict:list</div><div class="t" style="left:1583.5px;top:1363.0px;font-size:28px;color:#606266;font-weight:400;"><span style="letter-spacing:0.32px">/system/dict/index</span></div><div style="position:absolute;left:2248.0px;top:1353.25px;width:87.5px;height:46.5px;box-sizing:border-box;background:#e3f2da;border:2px solid #c3e4b0;border-radius:8px;color:#6aba43;font-size:24px;line-height:45px;text-align:center">正常</div><div style="position:absolute;left:2448.0px;top:1353.25px;width:87.5px;height:46.5px;box-sizing:border-box;background:#e3f2da;border:2px solid #c3e4b0;border-radius:8px;color:#6aba43;font-size:24px;line-height:45px;text-align:center">显示</div><div style="position:absolute;left:2921px;top:1344.0px;width:68px;height:64px;border-radius:50%;background:#6ccdb4"></div><svg style="position:absolute;left:2939px;top:1361.0px;color:#fff" width="32" height="32" viewBox="0 0 32 32" fill="none" stroke="currentColor" stroke-width="2.3" stroke-linecap="round" stroke-linejoin="round"><path d="M16.00,2.70 L19.88,10.66 L28.65,11.89 L22.28,18.04 L23.82,26.76 L16.00,22.60 L8.18,26.76 L9.72,18.04 L3.35,11.89 L12.12,10.66 Z"/></svg><svg style="position:absolute;left:135.5px;top:1462.5px;color:#606266" width="10" height="19" viewBox="0 0 10 19" fill="none" stroke="currentColor" stroke-width="1.9" stroke-linecap="round" stroke-linejoin="round"><path d="M1,1 L9,9.5 L1,18"/></svg><div class="t" style="left:168px;top:1461.0px;font-size:28px;color:#606266;font-weight:400;">参数管理</div><svg style="position:absolute;left:456.3px;top:1454.0px;color:#5f6166" width="29" height="28" viewBox="0 0 29 28" fill="none" stroke="currentColor" stroke-width="2" stroke-linecap="round" stroke-linejoin="round"><path d="M9,3 V1 H27 V23 H25"/><rect x="1.5" y="6" width="20" height="21"/><path d="M6.5,13 H16.5 M6.5,19 H16.5"/></svg><div class="t" style="left:596px;top:1461.0px;font-size:28px;color:#606266;font-weight:400;">6</div><div style="position:absolute;left:746.7px;top:1451.25px;width:87.5px;height:46.5px;box-sizing:border-box;background:#e3f2da;border:2px solid #c3e4b0;border-radius:8px;color:#6aba43;font-size:24px;line-height:45px;text-align:center">菜单</div><div class="t" style="left:917px;top:1461.0px;font-size:28px;color:#606266;font-weight:400;">system:config:list</div><div class="t" style="left:1583.5px;top:1461.0px;font-size:28px;color:#606266;font-weight:400;"><span style="letter-spacing:0.32px">/system/config/index</span></div><div style="position:absolute;left:2248.0px;top:1451.25px;width:87.5px;height:46.5px;box-sizing:border-box;background:#e3f2da;border:2px solid #c3e4b0;border-radius:8px;color:#6aba43;font-size:24px;line-height:45px;text-align:center">正常</div><div style="position:absolute;left:2448.0px;top:1451.25px;width:87.5px;height:46.5px;box-sizing:border-box;background:#e3f2da;border:2px solid #c3e4b0;border-radius:8px;color:#6aba43;font-size:24px;line-height:45px;text-align:center">显示</div><div style="position:absolute;left:2921px;top:1442.0px;width:68px;height:64px;border-radius:50%;background:#6ccdb4"></div><svg style="position:absolute;left:2939px;top:1459.0px;color:#fff" width="32" height="32" viewBox="0 0 32 32" fill="none" stroke="currentColor" stroke-width="2.3" stroke-linecap="round" stroke-linejoin="round"><path d="M16.00,2.70 L19.88,10.66 L28.65,11.89 L22.28,18.04 L23.82,26.76 L16.00,22.60 L8.18,26.76 L9.72,18.04 L3.35,11.89 L12.12,10.66 Z"/></svg><svg style="position:absolute;left:103.5px;top:1560.5px;color:#606266" width="10" height="19" viewBox="0 0 10 19" fill="none" stroke="currentColor" stroke-width="1.9" stroke-linecap="round" stroke-linejoin="round"><path d="M1,1 L9,9.5 L1,18"/></svg><div class="t" style="left:137px;top:1559.0px;font-size:28px;color:#606266;font-weight:400;">设备管理</div><svg style="position:absolute;left:452.8px;top:1557.7px;color:#5f6166" width="36" height="26" viewBox="0 0 36 26" fill="none" stroke="currentColor" stroke-width="2.4" stroke-linecap="round" stroke-linejoin="round"><circle cx="18" cy="13" r="4.2"/><path d="M11.5,6.5 A9,9 0 0 0 11.5,19.5"/><path d="M24.5,6.5 A9,9 0 0 1 24.5,19.5"/><path d="M7.5,2 A15,15 0 0 0 7.5,24"/><path d="M28.5,2 A15,15 0 0 1 28.5,24"/></svg><div class="t" style="left:596px;top:1559.0px;font-size:28px;color:#606266;font-weight:400;">1</div><div style="position:absolute;left:746.7px;top:1549.25px;width:87.5px;height:46.5px;box-sizing:border-box;background:#f9e4e5;border:2px solid #f2bdbf;border-radius:8px;color:#e36c6c;font-size:24px;line-height:45px;text-align:center">目录</div><div class="t" style="left:1583.5px;top:1559.0px;font-size:28px;color:#606266;font-weight:400;"><span style="letter-spacing:0.32px">Layout</span></div><div style="position:absolute;left:2248.0px;top:1549.25px;width:87.5px;height:46.5px;box-sizing:border-box;background:#e3f2da;border:2px solid #c3e4b0;border-radius:8px;color:#6aba43;font-size:24px;line-height:45px;text-align:center">正常</div><div style="position:absolute;left:2448.0px;top:1549.25px;width:87.5px;height:46.5px;box-sizing:border-box;background:#e3f2da;border:2px solid #c3e4b0;border-radius:8px;color:#6aba43;font-size:24px;line-height:45px;text-align:center">显示</div><div style="position:absolute;left:2921px;top:1540.0px;width:68px;height:64px;border-radius:50%;background:#6ccdb4"></div><svg style="position:absolute;left:2939px;top:1557.0px;color:#fff" width="32" height="32" viewBox="0 0 32 32" fill="none" stroke="currentColor" stroke-width="2.3" stroke-linecap="round" stroke-linejoin="round"><path d="M16.00,2.70 L19.88,10.66 L28.65,11.89 L22.28,18.04 L23.82,26.76 L16.00,22.60 L8.18,26.76 L9.72,18.04 L3.35,11.89 L12.12,10.66 Z"/></svg><svg style="position:absolute;left:103.5px;top:1658.5px;color:#606266" width="10" height="19" viewBox="0 0 10 19" fill="none" stroke="currentColor" stroke-width="1.9" stroke-linecap="round" stroke-linejoin="round"><path d="M1,1 L9,9.5 L1,18"/></svg><div class="t" style="left:137px;top:1657.0px;font-size:28px;color:#606266;font-weight:400;">规则链库</div><svg style="position:absolute;left:457.8px;top:1655.8px;color:#5f6166" width="26" height="26" viewBox="0 0 26 26" fill="none" stroke="currentColor" stroke-width="2.4" stroke-linecap="round" stroke-linejoin="round"><rect x="8" y="1.5" width="10" height="7.5"/><path d="M13,9 V13.5 M5,18 V13.5 H21 V18"/><rect x="1.5" y="17" width="8.5" height="7.5"/><rect x="16" y="17" width="8.5" height="7.5"/></svg><div class="t" style="left:596px;top:1657.0px;font-size:28px;color:#606266;font-weight:400;">2</div><div style="position:absolute;left:746.7px;top:1647.25px;width:87.5px;height:46.5px;box-sizing:border-box;background:#f9e4e5;border:2px solid #f2bdbf;border-radius:8px;color:#e36c6c;font-size:24px;line-height:45px;text-align:center">目录</div><div class="t" style="left:1583.5px;top:1657.0px;font-size:28px;color:#606266;font-weight:400;"><span style="letter-spacing:0.32px">Layout</span></div><div style="position:absolute;left:2248.0px;top:1647.25px;width:87.5px;height:46.5px;box-sizing:border-box;background:#e3f2da;border:2px solid #c3e4b0;border-radius:8px;color:#6aba43;font-size:24px;line-height:45px;text-align:center">正常</div><div style="position:absolute;left:2448.0px;top:1647.25px;width:87.5px;height:46.5px;box-sizing:border-box;background:#e3f2da;border:2px solid #c3e4b0;border-radius:8px;color:#6aba43;font-size:24px;line-height:45px;text-align:center">显示</div><div style="position:absolute;left:2921px;top:1638.0px;width:68px;height:64px;border-radius:50%;background:#6ccdb4"></div><svg style="position:absolute;left:2939px;top:1655.0px;color:#fff" width="32" height="32" viewBox="0 0 32 32" fill="none" stroke="currentColor" stroke-width="2.3" stroke-linecap="round" stroke-linejoin="round"><path d="M16.00,2.70 L19.88,10.66 L28.65,11.89 L22.28,18.04 L23.82,26.76 L16.00,22.60 L8.18,26.76 L9.72,18.04 L3.35,11.89 L12.12,10.66 Z"/></svg><div style="position:absolute;left:0;top:1646px;width:3329px;height:40px;background:linear-gradient(rgba(0,0,0,0),rgba(0,0,0,0.035))"></div><div style="position:absolute;left:0;top:1686px;width:3358px;height:20px;background:linear-gradient(#e5e5e7,#efeff0)"></div><div style="position:absolute;left:3329px;top:163px;width:29px;height:1543px;background:#f7f7f8"></div><div style="position:absolute;left:3344px;top:163px;width:11px;height:861px;border-radius:6px;background:#d5d5d8"></div><div style="position:absolute;left:3260px;top:337px;width:80px;height:80px;border-radius:10px 0 0 10px;background:#6ccdb4;box-shadow:inset 0 0 6px rgba(0,0,0,0.08)"></div><svg style="position:absolute;left:3286px;top:363px;color:#fff" width="28" height="28" viewBox="0 0 28 28" fill="none" stroke="currentColor" stroke-width="2" stroke-linecap="round" stroke-linejoin="round"><path d="M9.87,5.34 L10.92,1.47 L17.08,1.47 L18.13,5.34 L19.44,6.09 L23.31,5.07 L26.39,10.40 L23.57,13.25 L23.57,14.75 L26.39,17.60 L23.31,22.93 L19.44,21.91 L18.13,22.66 L17.08,26.53 L10.92,26.53 L9.87,22.66 L8.56,21.91 L4.69,22.93 L1.61,17.60 L4.43,14.75 L4.43,13.25 L1.61,10.40 L4.69,5.07 L8.56,6.09 Z"/><circle cx="14" cy="14" r="4.9"/></svg><div style="position:absolute;left:0;top:0;width:3358px;height:1706px;overflow:hidden;z-index:3;pointer-events:none"><div class="wm" style="left:69.5px;top:94.5px">PandaX</div><div class="wm" style="left:469.5px;top:94.5px">PandaX</div><div class="wm" style="left:869.5px;top:94.5px">PandaX</div><div class="wm" style="left:1269.5px;top:94.5px">PandaX</div><div class="wm" style="left:1669.5px;top:94.5px">PandaX</div><div class="wm" style="left:2069.5px;top:94.5px">PandaX</div><div class="wm" style="left:2469.5px;top:94.5px">PandaX</div><div class="wm" style="left:2869.5px;top:94.5px">PandaX</div><div class="wm" style="left:3269.5px;top:94.5px">PandaX</div><div class="wm" style="left:69.5px;top:354.5px">PandaX</div><div class="wm" style="left:469.5px;top:354.5px">PandaX</div><div class="wm" style="left:869.5px;top:354.5px">PandaX</div><div class="wm" style="left:1269.5px;top:354.5px">PandaX</div><div class="wm" style="left:1669.5px;top:354.5px">PandaX</div><div class="wm" style="left:2069.5px;top:354.5px">PandaX</div><div class="wm" style="left:2469.5px;top:354.5px">PandaX</div><div class="wm" style="left:2869.5px;top:354.5px">PandaX</div><div class="wm" style="left:3269.5px;top:354.5px">PandaX</div><div class="wm" style="left:69.5px;top:614.5px">PandaX</div><div class="wm" style="left:469.5px;top:614.5px">PandaX</div><div class="wm" style="left:869.5px;top:614.5px">PandaX</div><div class="wm" style="left:1269.5px;top:614.5px">PandaX</div><div class="wm" style="left:1669.5px;top:614.5px">PandaX</div><div class="wm" style="left:2069.5px;top:614.5px">PandaX</div><div class="wm" style="left:2469.5px;top:614.5px">PandaX</div><div class="wm" style="left:2869.5px;top:614.5px">PandaX</div><div class="wm" style="left:3269.5px;top:614.5px">PandaX</div><div class="wm" style="left:69.5px;top:874.5px">PandaX</div><div class="wm" style="left:469.5px;top:874.5px">PandaX</div><div class="wm" style="left:869.5px;top:874.5px">PandaX</div><div class="wm" style="left:1269.5px;top:874.5px">PandaX</div><div class="wm" style="left:1669.5px;top:874.5px">PandaX</div><div class="wm" style="left:2069.5px;top:874.5px">PandaX</div><div class="wm" style="left:2469.5px;top:874.5px">PandaX</div><div class="wm" style="left:2869.5px;top:874.5px">PandaX</div><div class="wm" style="left:3269.5px;top:874.5px">PandaX</div><div class="wm" style="left:69.5px;top:1134.5px">PandaX</div><div class="wm" style="left:469.5px;top:1134.5px">PandaX</div><div class="wm" style="left:869.5px;top:1134.5px">PandaX</div><div class="wm" style="left:1269.5px;top:1134.5px">PandaX</div><div class="wm" style="left:1669.5px;top:1134.5px">PandaX</div><div class="wm" style="left:2069.5px;top:1134.5px">PandaX</div><div class="wm" style="left:2469.5px;top:1134.5px">PandaX</div><div class="wm" style="left:2869.5px;top:1134.5px">PandaX</div><div class="wm" style="left:3269.5px;top:1134.5px">PandaX</div><div class="wm" style="left:69.5px;top:1394.5px">PandaX</div><div class="wm" style="left:469.5px;top:1394.5px">PandaX</div><div class="wm" style="left:869.5px;top:1394.5px">PandaX</div><div class="wm" style="left:1269.5px;top:1394.5px">PandaX</div><div class="wm" style="left:1669.5px;top:1394.5px">PandaX</div><div class="wm" style="left:2069.5px;top:1394.5px">PandaX</div><div class="wm" style="left:2469.5px;top:1394.5px">PandaX</div><div class="wm" style="left:2869.5px;top:1394.5px">PandaX</div><div class="wm" style="left:3269.5px;top:1394.5px">PandaX</div><div class="wm" style="left:69.5px;top:1654.5px">PandaX</div><div class="wm" style="left:469.5px;top:1654.5px">PandaX</div><div class="wm" style="left:869.5px;top:1654.5px">PandaX</div><div class="wm" style="left:1269.5px;top:1654.5px">PandaX</div><div class="wm" style="left:1669.5px;top:1654.5px">PandaX</div><div class="wm" style="left:2069.5px;top:1654.5px">PandaX</div><div class="wm" style="left:2469.5px;top:1654.5px">PandaX</div><div class="wm" style="left:2869.5px;top:1654.5px">PandaX</div><div class="wm" style="left:3269.5px;top:1654.5px">PandaX</div></div>
</body></html>
